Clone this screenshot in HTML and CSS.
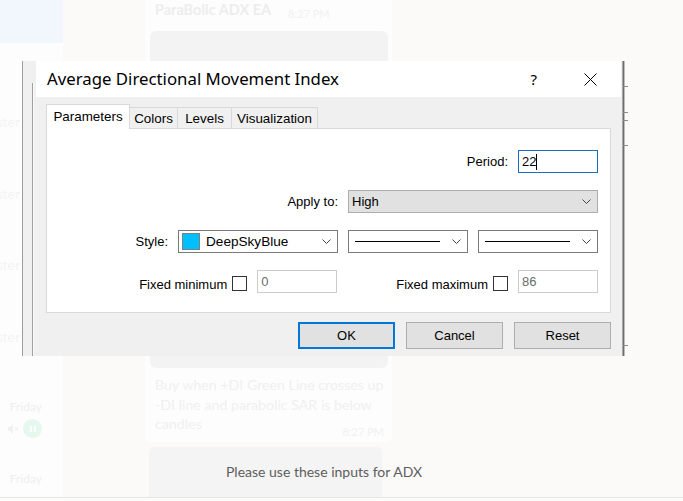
FILE: index.html
```html
<!DOCTYPE html>
<html>
<head>
<meta charset="utf-8">
<link rel="stylesheet" href="styles.css">
</head>
<body>
<div class="app">
  <aside class="side">
    <div class="side-top"></div>
    <div class="side-row"><span class="faint">ester</span></div>
    <div class="side-row"><span class="faint">ester</span></div>
    <div class="side-row"><span class="faint">ester</span></div>
    <div class="side-row"><span class="faint">ester</span></div>
    <div class="side-row day-row">
      <span class="day">Friday</span>
      <div class="side-icons">
        <svg class="mute" width="12" height="12" viewBox="0 0 12 12"><path d="M1 4h2l3-3v10l-3-3H1z" fill="#f0f0f0"/><path d="M8 4l3 4M11 4l-3 4" stroke="#f0f0f0" stroke-width="1.2"/></svg>
        <span class="pause"><svg width="8" height="8" viewBox="0 0 8 8"><path d="M2 1v6M6 1v6" stroke="#fff" stroke-width="1.6"/></svg></span>
      </div>
    </div>
    <div class="side-row day-row"><span class="day">Friday</span></div>
  </aside>
  <main class="chat">
    <div class="bubble b1">
      <div class="b1-head"><span class="sender">ParaBolic ADX EA</span><span class="time">8:27 PM</span></div>
      <div class="img"></div>
      <p class="msg">Buy when +DI Green Line crosses up -DI line and parabolic SAR is below candles</p>
      <div class="time end">8:27 PM</div>
    </div>
    <div class="bubble b2"><span>Please use these inputs for ADX</span></div>
  </main>
</div>
<div class="footer-line"></div>

<div class="mt4">
  <span class="mt4-inner"></span>
  <span class="tick t1"></span><span class="tick t2"></span><span class="tick t3"></span><span class="tick t4"></span><span class="tick t5"></span>
</div>

<div class="dialog">
  <div class="titlebar">
    <span class="title">Average Directional Movement Index</span>
    <span class="help">?</span>
    <svg class="close" width="13" height="13" viewBox="0 0 13 13"><path d="M0.5 0.5l12 12M12.5 0.5l-12 12" stroke="#000" stroke-width="1"/></svg>
  </div>
  <div class="dbody">
    <div class="tabs">
      <span class="tab active">Parameters</span>
      <span class="tab tw48">Colors</span>
      <span class="tab tw54">Levels</span>
      <span class="tab tw86">Visualization</span>
    </div>
    <div class="panel">
      <div class="row">
        <span class="lbl">Period:</span>
        <span class="field focus w80">22<span class="caret"></span></span>
      </div>
      <div class="row">
        <span class="lbl">Apply to:</span>
        <span class="select gray w250"><span class="sel-text">High</span>
          <svg class="chev" width="9" height="6" viewBox="0 0 9 6"><path d="M0.5 0.5l4 4 4-4" fill="none" stroke="#444" stroke-width="1"/></svg></span>
      </div>
      <div class="row">
        <span class="lbl">Style:</span>
        <span class="select w160"><span class="swatch"></span><span class="sel-text wide">DeepSkyBlue</span>
          <svg class="chev" width="9" height="6" viewBox="0 0 9 6"><path d="M0.5 0.5l4 4 4-4" fill="none" stroke="#444" stroke-width="1"/></svg></span>
        <span class="select w120 gapl"><span class="line"></span>
          <svg class="chev" width="9" height="6" viewBox="0 0 9 6"><path d="M0.5 0.5l4 4 4-4" fill="none" stroke="#444" stroke-width="1"/></svg></span>
        <span class="select w120 gapl"><span class="line"></span>
          <svg class="chev" width="9" height="6" viewBox="0 0 9 6"><path d="M0.5 0.5l4 4 4-4" fill="none" stroke="#444" stroke-width="1"/></svg></span>
      </div>
      <div class="row row4">
        <span class="fixlbl">Fixed minimum</span>
        <span class="check"></span>
        <span class="field disabled w80">0</span>
        <span class="fixlbl gapbig">Fixed maximum</span>
        <span class="check"></span>
        <span class="field disabled w80">86</span>
      </div>
    </div>
    <div class="buttons">
      <span class="btn default">OK</span>
      <span class="btn">Cancel</span>
      <span class="btn">Reset</span>
    </div>
  </div>
</div>
</body>
</html>
```
FILE: styles.css
```css
html, body {
  margin: 0;
  padding: 0;
}
body {
  width: 683px;
  height: 501px;
  overflow: hidden;
  background: #fcfcfb;
  font-family: Lato, "Noto Sans", sans-serif;
  position: relative;
}
.app {
  display: grid;
  grid-template-columns: 63px 1fr;
  height: 497px;
  overflow: hidden;
}
.side {
  background: #fdfdfd;
  display: flex;
  flex-direction: column;
}
.side-top {
  height: 43px;
  flex: none;
  background: #f1f7fc;
  margin-bottom: 43px;
}
.side-row {
  height: 71.5px;
  flex: none;
  display: flex;
  flex-direction: column;
  align-items: flex-end;
  padding-right: 21px;
  box-sizing: border-box;
  padding-top: 26px;
}
.faint {
  font-size: 14px;
  line-height: 20px;
  color: #f4f4f4;
  margin-right: 22px;
}
.day-row {
  padding-top: 27px;
}
.day {
  font-size: 12px;
  line-height: 16px;
  color: #efefef;
}
.side-icons {
  display: flex;
  align-items: center;
  gap: 4px;
  margin-top: 4px;
}
.pause {
  width: 19px;
  height: 19px;
  border-radius: 50%;
  background: #e6f8ee;
  display: flex;
  align-items: center;
  justify-content: center;
}
.chat {
  background: #fbfaf8;
  padding-left: 82px;
}
.bubble {
  box-sizing: border-box;
}
.b1 {
  width: 247px;
  margin-top: -8px;
  padding: 0 4px 3px 5px;
  background: #fdfdfd;
  border-radius: 6px;
}
.b1-head {
  height: 39px;
  display: flex;
  align-items: flex-start;
  padding-left: 5px;
  padding-top: 7px;
  box-sizing: border-box;
  gap: 17px;
}
.sender {
  font-weight: 700;
  font-size: 14.5px;
  line-height: 22px;
  color: #ededed;
}
.time {
  font-size: 11px;
  line-height: 14px;
  color: #f1f1f1;
  margin-top: 8px;
}
.img {
  width: 238px;
  height: 337px;
  background: #f3f3f3;
  border-radius: 6px;
}
.msg {
  margin: 7px 0 0 5px;
  font-size: 14.2px;
  line-height: 19.5px;
  color: #f0f0f0;
}
.time.end {
  text-align: right;
  margin-top: -9px;
  padding-right: 4px;
}
.b2 {
  margin-top: 5px;
  margin-left: 4px;
  width: 233px;
  height: 60px;
  background: #f4f4f4;
  border-radius: 5px 5px 0 0;
  padding: 15px 0 0 77px;
  white-space: nowrap;
  font-size: 14px;
  line-height: 20px;
  color: #5d5d5d;
}
.footer-line {
  height: 1px;
  background: #e6e6e6;
}

/* MT4 window behind dialog */
.mt4 {
  position: absolute;
  left: 22px;
  top: 61px;
  width: 599px;
  height: 295px;
  background: #f0f0f0;
  border-left: 1px solid #9d9d9d;
  border-right: 1px solid #a8a8a8;
  box-shadow: 1px 0 0 #6e6e6e, 2px 0 0 #bdbdbd;
}
.mt4-inner {
  position: absolute;
  left: 9px;
  top: 22px;
  bottom: 0;
  width: 1px;
  background: #a0a0a0;
  box-shadow: 1px 0 0 #fafafa;
}
.tick {
  position: absolute;
  left: 600px;
  width: 5px;
  height: 1px;
  background: #8a8a8a;
}
.t1 { top: 25px; }
.t2 { top: 51px; }
.t3 { top: 59px; }
.t4 { top: 84px; }
.t5 { top: 284px; }

/* Dialog */
.dialog {
  position: absolute;
  left: 36px;
  top: 61px;
  width: 585px;
  height: 294px;
  display: flex;
  flex-direction: column;
  font-family: "Liberation Sans", Arial, sans-serif;
  font-size: 13px;
  color: #000;
}
.titlebar {
  height: 36px;
  flex: none;
  background: #fff;
  display: flex;
  align-items: center;
  padding-left: 11px;
}
.title {
  font-family: "Noto Sans", "Open Sans", sans-serif;
  font-size: 16.8px;
  flex: 1;
  padding-bottom: 2px;
}
.help {
  font-family: "Noto Sans", sans-serif;
  font-size: 15px;
  margin-right: 47px;
}
.close {
  margin-right: 24px;
}
.dbody {
  flex: 1;
  background: #f0f0f0;
  padding: 7px 10px 0 10px;
  display: flex;
  flex-direction: column;
}
.tabs {
  display: flex;
  align-items: flex-end;
  height: 24px;
  position: relative;
  z-index: 1;
}
.tab {
  height: 21px;
  box-sizing: border-box;
  border: 1px solid #d9d9d9;
  border-left: none;
  border-bottom: none;
  line-height: 21px;
  background: #f0f0f0;
  text-align: center;
  font-size: 13.4px;
}
.tw48 { width: 48px; }
.tw54 { width: 54px; }
.tw86 { width: 86px; }
.tab.active {
  width: 84px;
  height: 25px;
  margin-bottom: -1px;
  border-left: 1px solid #d9d9d9;
  background: #fff;
  line-height: 24px;
}
.panel {
  height: 185px;
  box-sizing: border-box;
  border: 1px solid #d9d9d9;
  background: #fff;
  padding: 21px 12px 0 0;
  display: flex;
  flex-direction: column;
  gap: 17px;
}
.row {
  display: flex;
  justify-content: flex-end;
  align-items: center;
  height: 23px;
}
.row4 {
  align-items: flex-start;
}
.lbl {
  margin-right: 10px;
}
.field, .select {
  height: 23px;
  box-sizing: border-box;
  display: flex;
  align-items: center;
  flex: none;
}
.w80 { width: 80px; }
.w120 { width: 120px; }
.w160 { width: 160px; }
.w250 { width: 250px; }
.gapl { margin-left: 10px; }
.field {
  padding-left: 3px;
  border: 1px solid #7a7a7a;
  background: #fff;
}
.field.focus {
  border-color: #1a6fc1;
}
.caret {
  width: 1px;
  height: 16px;
  background: #000;
}
.field.disabled {
  border-color: #cccccc;
  color: #6d6d6d;
  align-items: flex-start;
  padding-top: 3px;
}
.select {
  border: 1px solid #7a7a7a;
  background: #fff;
  padding: 0 6px 0 3px;
}
.select.gray {
  background: #e1e1e1;
  border-color: #adadad;
}
.sel-text {
  flex: 1;
}
.sel-text.wide {
  font-size: 13.6px;
}
.swatch {
  width: 16px;
  height: 15px;
  background: #00bfff;
  border: 1px solid #7f7f7f;
  margin-right: 6px;
}
.line {
  width: 85px;
  height: 1px;
  background: #000;
  margin-left: 3px;
  margin-right: 12px;
  flex: none;
}
.chev {
  margin-left: auto;
  flex: none;
}
.fixlbl {
  margin-right: 5px;
  line-height: 15px;
  padding-top: 7px;
}
.gapbig {
  margin-left: 59px;
}
.check {
  width: 15px;
  height: 15px;
  box-sizing: border-box;
  border: 1px solid #333;
  background: #fff;
  margin-right: 10px;
  margin-top: 6px;
  flex: none;
}
.buttons {
  display: flex;
  justify-content: flex-end;
  gap: 11px;
  margin-top: 9px;
}
.btn {
  width: 97px;
  height: 27px;
  box-sizing: border-box;
  border: 1px solid #adadad;
  background: #e1e1e1;
  display: flex;
  align-items: center;
  justify-content: center;
}
.btn.default {
  border: 2px solid #0078d7;
}
```
